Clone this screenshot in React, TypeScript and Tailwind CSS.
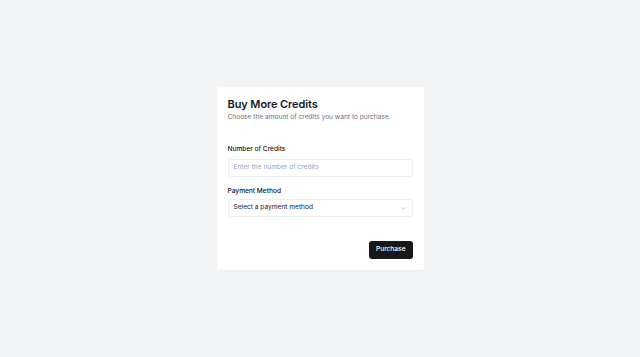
import React from 'react';

// Small chevron used by the select trigger
const Chevron: React.FC = () => (
    <svg width="7" height="7" viewBox="0 0 24 24" fill="none" stroke="currentColor" strokeWidth="2" strokeLinecap="round" strokeLinejoin="round">
        <path d="m6 9 6 6 6-6" />
    </svg>
);

export default function App() {
    return (
        <div className="w-full h-[357px] bg-[#f3f4f6] flex items-center justify-center font-['Inter',sans-serif]">
            <div className="w-[207px] bg-white rounded-[3px] shadow-[0_1px_2px_rgba(0,0,0,0.04)] p-[11px]">
                <div className="flex flex-col gap-[2px]">
                    <h2 className="text-[11px] leading-[12px] font-semibold text-[#111827] tracking-[-0.1px]">Buy More Credits</h2>
                    <p className="text-[6.6px] leading-[10px] text-[#6b7280]">Choose the amount of credits you want to purchase.</p>
                </div>

                <div className="mt-[22px] flex flex-col gap-[5px]">
                    <label className="text-[6.6px] leading-[10px] font-medium text-[#111827]">Number of Credits</label>
                    <div className="h-[18px] rounded-[3px] border border-[#eceef1] flex items-center px-[5px] text-[6.6px] text-[#9ca3af]">
                        Enter the number of credits
                    </div>
                </div>

                <div className="mt-[9px] flex flex-col gap-[3px]">
                    <label className="text-[6.6px] leading-[10px] font-medium text-[#111827]">Payment Method</label>
                    <div className="h-[18px] rounded-[3px] border border-[#eceef1] flex items-center justify-between px-[5px] text-[6.6px] text-[#111827]">
                        <span>Select a payment method</span>
                        <span className="text-[#9ca3af]"><Chevron /></span>
                    </div>
                </div>

                <div className="mt-[24px] flex justify-end">
                    <button className="h-[18px] px-[7px] rounded-[3px] bg-[#18181b] text-white text-[6.6px] font-medium">Purchase</button>
                </div>
            </div>
        </div>
    );
}
